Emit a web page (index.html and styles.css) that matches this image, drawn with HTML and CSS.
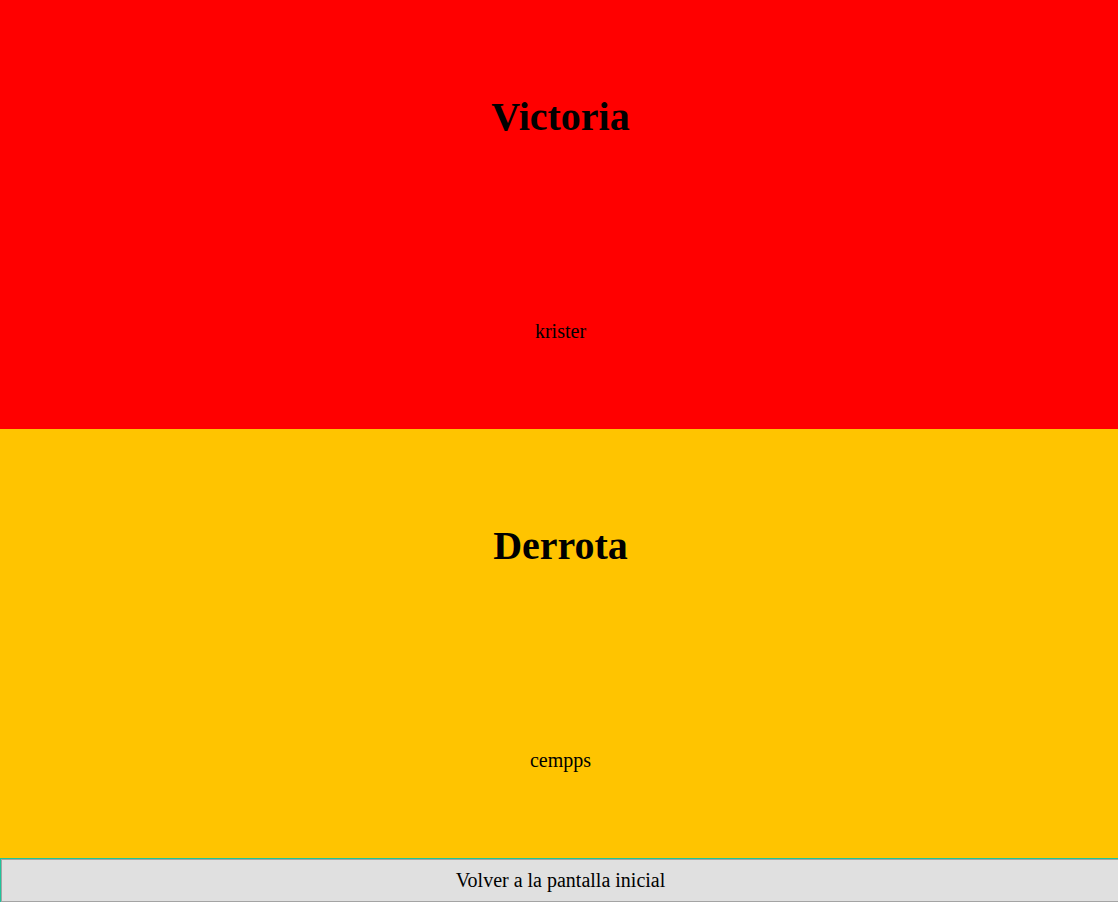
FILE: index.html
```html
<!DOCTYPE html>
<html lang="es">
<head>
<meta charset="utf-8">
<title>Resultado</title>
<link rel="stylesheet" href="styles.css">
</head>
<body>
<div class="page">
  <section class="panel panel-win">
    <h1 class="panel-title">Victoria</h1>
    <p class="panel-name">krister</p>
  </section>
  <section class="panel panel-lose">
    <h1 class="panel-title">Derrota</h1>
    <p class="panel-name">cempps</p>
  </section>
  <div class="back-wrap">
    <button class="back-btn" type="button">Volver a la pantalla inicial</button>
  </div>
</div>
</body>
</html>
```

FILE: styles.css
```css
html, body {
  margin: 0;
  padding: 0;
  height: 100%;
}
body {
  font-family: "Liberation Serif", "Times New Roman", serif;
  color: #000;
  overflow: hidden;
}
.page {
  display: flex;
  flex-direction: column;
  height: 902px;
  width: calc(100% + 3px);
}
.panel {
  flex: 1 1 0;
  display: flex;
  flex-direction: column;
  justify-content: space-around;
  align-items: center;
  text-align: center;
}
.panel-win { background: #ff0000; }
.panel-lose { background: #ffc400; }
.panel-title {
  font-size: 40px;
  font-weight: bold;
  margin: 26.8px 0;
  line-height: normal;
}
.panel-name {
  font-size: 20px;
  margin: 20px 0;
  line-height: normal;
}
.back-wrap {
  height: 44px;
  box-sizing: border-box;
  border: 1px solid #1fc39a;
  border-bottom: none;
  display: flex;
}
.back-btn {
  flex: 1;
  margin: 0;
  padding: 0;
  box-sizing: border-box;
  background: #e0e0e0;
  border: 1px solid #a4a4a4;
  font-family: "Liberation Serif", "Times New Roman", serif;
  font-size: 20px;
  color: #000;
  cursor: pointer;
}
```
